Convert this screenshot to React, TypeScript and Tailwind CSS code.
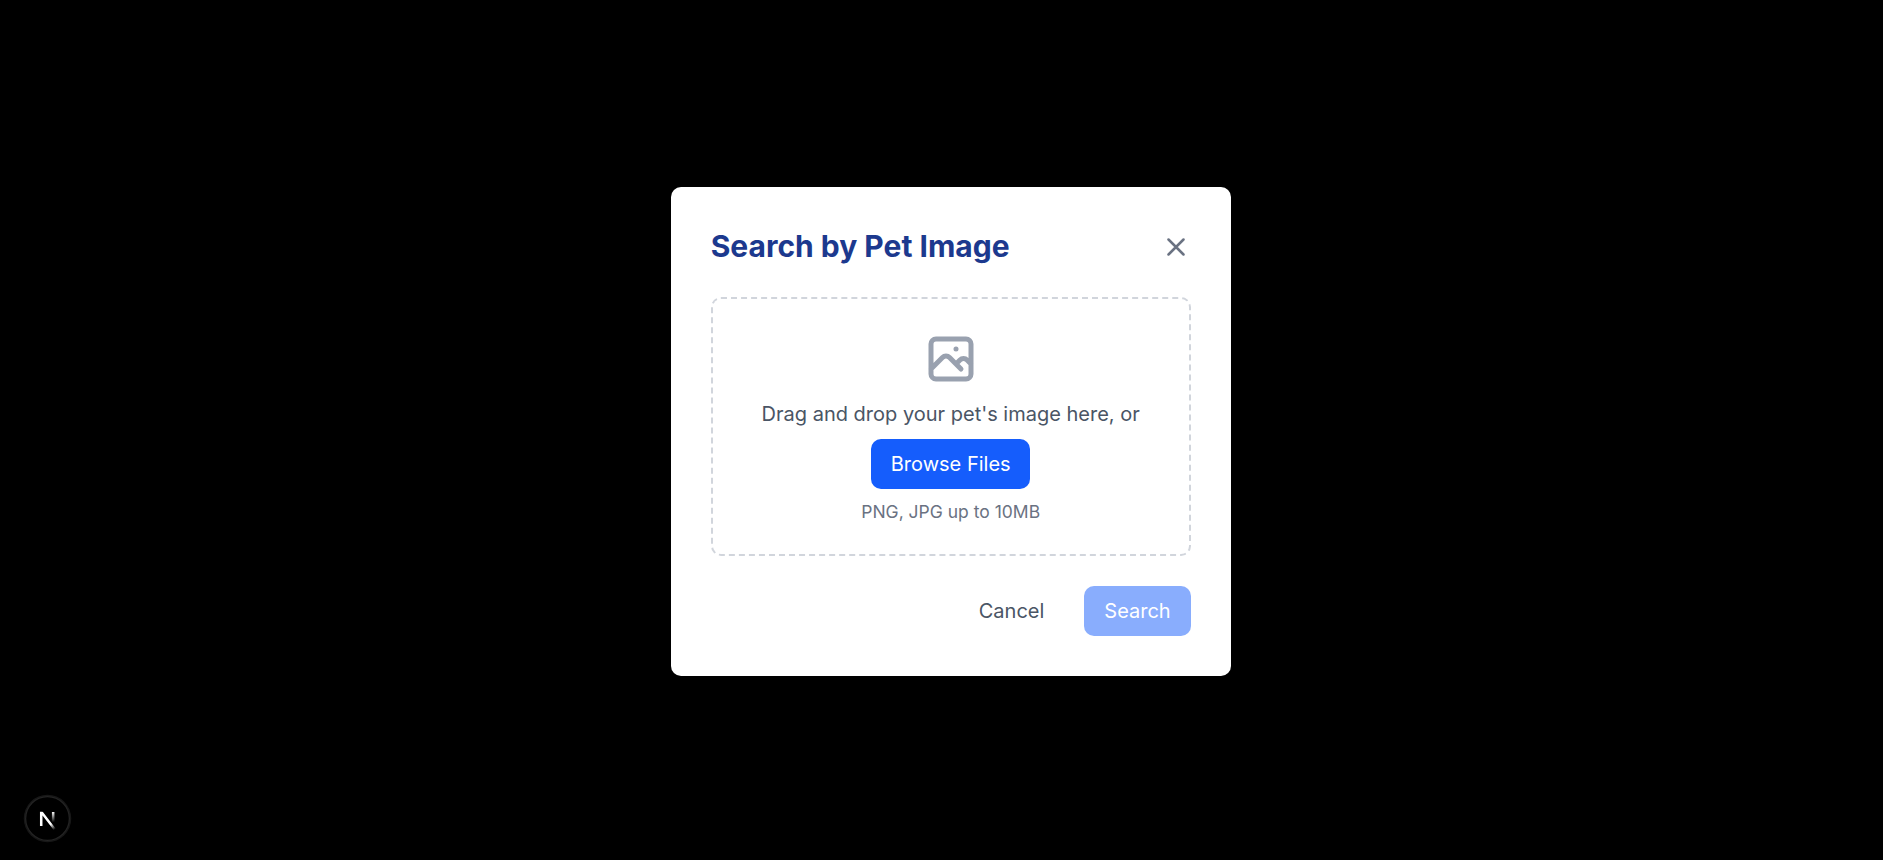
function CloseIcon() {
  return (
    <svg className="w-[30px] h-[30px]" fill="none" stroke="currentColor" viewBox="0 0 24 24">
      <path strokeLinecap="round" strokeLinejoin="round" strokeWidth={2} d="M6 18L18 6M6 6l12 12" />
    </svg>
  );
}

function ImageIcon() {
  return (
    <svg className="w-15 h-15 text-gray-400" fill="none" stroke="currentColor" viewBox="0 0 24 24">
      <path
        strokeLinecap="round"
        strokeLinejoin="round"
        strokeWidth={2}
        d="M4 16l4.586-4.586a2 2 0 012.828 0L16 16m-2-2l1.586-1.586a2 2 0 012.828 0L20 14m-6-6h.01M6 20h12a2 2 0 002-2V6a2 2 0 00-2-2H6a2 2 0 00-2 2v12a2 2 0 002 2z"
      />
    </svg>
  );
}

function DevBadge() {
  return (
    <button
      aria-label="Open dev tools"
      className="fixed left-[25px] bottom-[19px] w-[45px] h-[45px] rounded-full bg-black shadow-[0_0_0_1.25px_#171717,inset_0_0_0_1.25px_rgba(255,255,255,0.14)]"
    >
      <svg className="w-[45px] h-[45px]" viewBox="0 0 40 40" fill="none">
        <g transform="translate(11.8, 12.5) scale(1.12)" clipPath="url(#letter)">
          <path d="M13.3 15.6 L2.34 1.4 V12.6" stroke="url(#diagonal)" strokeWidth="2" />
          <path d="M11.825 1.5 V13.1" stroke="url(#stem)" strokeWidth="2" />
        </g>
        <defs>
          <clipPath id="letter">
            <rect x="0" y="1.3" width="16" height="16" />
          </clipPath>
          <linearGradient id="diagonal" x1="9.95555" y1="11.1226" x2="15.4778" y2="17.9671" gradientUnits="userSpaceOnUse">
            <stop stopColor="white" />
            <stop offset="0.604072" stopColor="white" stopOpacity="0" />
            <stop offset="1" stopColor="white" stopOpacity="0" />
          </linearGradient>
          <linearGradient id="stem" x1="11.8222" y1="1.40039" x2="11.791" y2="9.62542" gradientUnits="userSpaceOnUse">
            <stop stopColor="white" />
            <stop offset="1" stopColor="white" stopOpacity="0" />
          </linearGradient>
        </defs>
      </svg>
    </button>
  );
}

export default function App() {
  return (
    <div className="min-h-screen flex items-center justify-center bg-black pl-[18.4px] pt-[3px] font-['Inter',sans-serif]">
      <div className="w-[560px] bg-white rounded-[10px] p-10">
        <div className="flex justify-between items-center mb-[30px]">
          <h2 className="text-3xl leading-[38px] pb-0.5 font-bold text-blue-900">Search by Pet Image</h2>
          <button aria-label="Close" className="text-gray-500 hover:text-gray-700">
            <CloseIcon />
          </button>
        </div>

        <div className="flex flex-col items-center gap-2.5 border-2 border-dashed border-gray-300 rounded-[10px] p-[30px] text-center">
          <ImageIcon />
          <p className="text-xl leading-[30px] text-gray-600">Drag and drop your pet's image here, or</p>
          <button className="w-[159px] whitespace-nowrap bg-blue-600 hover:bg-blue-700 text-white text-xl leading-[30px] py-2.5 rounded-[10px]">
            Browse Files
          </button>
          <p className="text-[17.5px] leading-[25px] text-gray-500">PNG, JPG up to 10MB</p>
        </div>

        <div className="flex justify-end gap-5 mt-[30px] text-xl leading-[30px]">
          <button className="px-5 py-2.5 text-gray-600 hover:text-gray-800">Cancel</button>
          <button disabled className="px-5 py-2.5 bg-blue-600 text-white rounded-[10px] disabled:opacity-50">
            Search
          </button>
        </div>
      </div>
      <DevBadge />
    </div>
  );
}
